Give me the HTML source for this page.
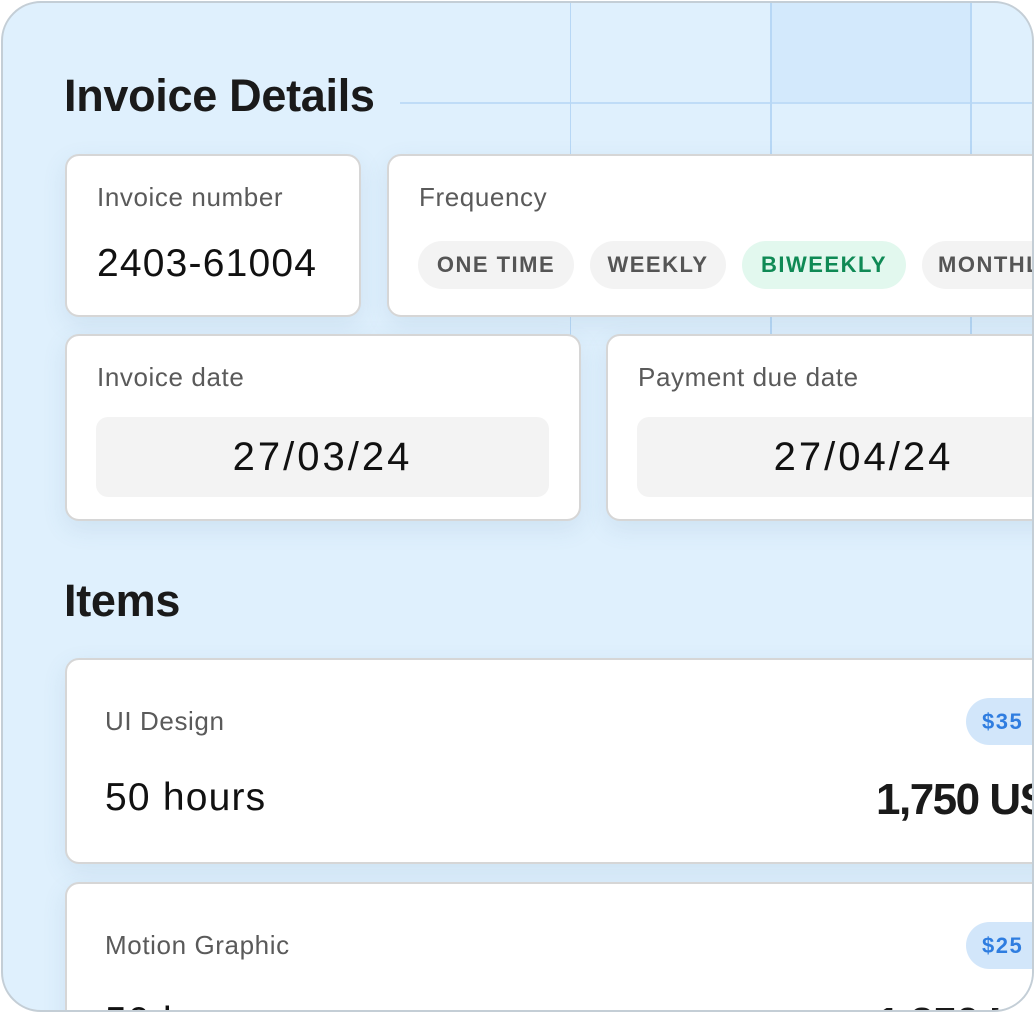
<!DOCTYPE html>
<html><head><style>
html,body{margin:0;padding:0;width:1034px;height:1013px;overflow:hidden;background:#fff;font-family:"Liberation Sans",sans-serif}
.wrap{position:relative;width:1034px;height:1013px;overflow:hidden}
.frame{position:absolute;left:1px;top:1px;width:1029px;height:1007px;border:2px solid #c4ced6;border-radius:40px;background:#dff0fd;overflow:hidden}
.in{position:absolute;left:-3px;top:-3px;width:1034px;height:1013px;overflow:hidden}
.gl{position:absolute;background:#b7d7f5}
.card{position:absolute;background:#fff;border:2px solid #d6d6d6;border-radius:14px;box-shadow:0 8px 24px rgba(80,120,160,.12);box-sizing:border-box}
.lbl{position:absolute;font-size:26px;color:#5a5a5a;white-space:nowrap;letter-spacing:.6px}
.val{position:absolute;font-size:39px;color:#111;white-space:nowrap;letter-spacing:1.2px}
.h{position:absolute;font-weight:bold;font-size:45px;color:#1a1a1a;letter-spacing:-.3px;white-space:nowrap}
.pill{position:absolute;top:241px;height:48px;border-radius:24px;background:#f3f3f3;color:#555;font-weight:bold;font-size:22px;letter-spacing:1.5px;line-height:48px;text-align:center;white-space:nowrap}
.date{position:absolute;background:#f3f3f3;border-radius:12px;font-size:40px;letter-spacing:3px;text-align:center;line-height:80px;color:#111;height:80px}
.rate{position:absolute;height:47px;border-radius:24px;background:#d2e6fa;color:#2f7de0;font-weight:bold;font-size:22px;letter-spacing:1.5px;line-height:47px;padding-left:16px;width:100px}
.amt{position:absolute;font-weight:bold;font-size:44px;letter-spacing:-1.5px;white-space:nowrap;color:#1a1a1a}
</style></head><body><div class="wrap">
<div class="frame"><div class="in">
 <div class="gl" style="left:570px;top:0;width:1px;height:340px"></div>
 <div class="gl" style="left:770px;top:0;width:2px;height:340px"></div>
 <div class="gl" style="left:970px;top:0;width:2px;height:340px"></div>
 <div class="gl" style="left:400px;top:102px;width:700px;height:2px;opacity:.8"></div>
 <div style="position:absolute;left:772px;top:0;width:198px;height:102px;background:rgba(190,220,248,.35)"></div>
<div class="h" style="left:64px;top:70px">Invoice Details</div>
<div class="card" style="left:65px;top:154px;width:296px;height:163px"></div>
<div class="lbl" style="left:97px;top:182px">Invoice number</div>
<div class="val" style="left:97px;top:242px">2403-61004</div>
<div class="card" style="left:387px;top:154px;width:700px;height:163px"></div>
<div class="lbl" style="left:419px;top:182px">Frequency</div>
<div class="pill" style="left:418px;width:156px">ONE TIME</div>
<div class="pill" style="left:590px;width:136px">WEEKLY</div>
<div class="pill" style="left:742px;width:164px;background:#e2f8ee;color:#0f8a55">BIWEEKLY</div>
<div class="pill" style="left:922px;width:160px;text-align:left;padding-left:16px">MONTHLY</div>
<div class="card" style="left:65px;top:334px;width:516px;height:187px"></div>
<div class="lbl" style="left:97px;top:362px">Invoice date</div>
<div class="date" style="left:96px;top:417px;width:453px">27/03/24</div>
<div class="card" style="left:606px;top:334px;width:500px;height:187px"></div>
<div class="lbl" style="left:638px;top:362px">Payment due date</div>
<div class="date" style="left:637px;top:417px;width:453px">27/04/24</div>
<div class="h" style="left:64px;top:575px">Items</div>
<div class="card" style="left:65px;top:658px;width:1000px;height:206px"></div>
<div class="lbl" style="left:105px;top:706px">UI Design</div>
<div class="val" style="left:105px;top:776px">50 hours</div>
<div class="rate" style="left:966px;top:698px">$35</div>
<div class="amt" style="left:876px;top:775px">1,750 USD</div>
<div class="card" style="left:65px;top:882px;width:1000px;height:206px"></div>
<div class="lbl" style="left:105px;top:930px">Motion Graphic</div>
<div class="val" style="left:105px;top:1000px">50 hours</div>
<div class="rate" style="left:966px;top:922px">$25</div>
<div class="amt" style="left:876px;top:999px">1,250 USD</div>
</div></div>
</div></body></html>
